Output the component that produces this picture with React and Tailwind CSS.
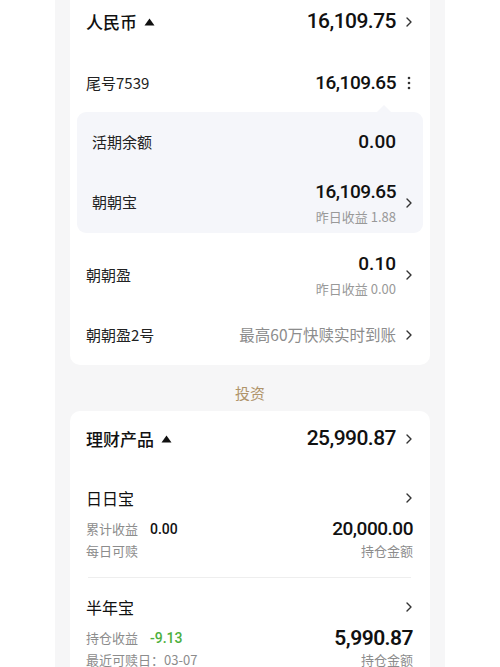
import React from 'react';

const cjk = { fontFamily: '"Noto Sans CJK SC", "Noto Sans", sans-serif' };
const num = { fontFamily: 'Roboto, "Noto Sans CJK SC", sans-serif' };

const Chevron = ({ className = '' }) => (
    <svg width="8" height="12" viewBox="0 0 8 12" className={className} fill="none" stroke="#333" strokeWidth="1.4" strokeLinecap="round" strokeLinejoin="round">
        <path d="M2 2l4 4-4 4" />
    </svg>
);

const Caret = () => (
    <svg width="11" height="8" viewBox="0 0 11 8" className="ml-[7px]">
        <path d="M5.5 0.5L10.5 7.5H0.5z" fill="#111" />
    </svg>
);

const Kebab = () => (
    <svg width="8" height="14" viewBox="0 0 8 14" fill="#333">
        <circle cx="4" cy="2" r="1.3" />
        <circle cx="4" cy="7" r="1.3" />
        <circle cx="4" cy="12" r="1.3" />
    </svg>
);

// right slot that keeps the amounts aligned whether or not a chevron sits there
const Slot = ({ children }) => (
    <div className="w-[17px] flex justify-end items-center">{children}</div>
);

const Product = ({ name, k1, v1, v1Class, k2, amount, amountClass }) => (
    <div>
        <div className="h-[26px] flex items-center justify-between">
            <span className="text-[16px] text-[#111]">{name}</span>
            <Chevron />
        </div>
        <div className="mt-[7px] flex justify-between">
            <div className="text-[13px] leading-[22px] text-[#8c8c8c]">
                <div className="flex items-center">
                    <span>{k1}</span>
                    <span className={`ml-[12px] text-[14px] font-medium ${v1Class}`} style={num}>{v1}</span>
                </div>
                <div>{k2}</div>
            </div>
            <div className="text-right leading-[22px]">
                <div className={`text-[#111] tracking-tight ${amountClass}`} style={num}>{amount}</div>
                <div className="text-[13px] text-[#8c8c8c]">持仓金额</div>
            </div>
        </div>
    </div>
);

export default function App() {
    return (
        <div className="w-full min-h-screen bg-white flex justify-center" style={cjk}>
            <div className="w-[390px] min-h-[667px] bg-[#f6f6f7] px-[15px]">
                {/* 人民币 card */}
                <div className="bg-white rounded-b-[10px] pt-[8px]">
                    <div className="h-[28px] pl-4 pr-[17px] flex items-center justify-between">
                        <div className="flex items-center text-[17px] font-medium text-[#111]">人民币<Caret /></div>
                        <div className="flex items-center">
                            <span className="text-[21px] font-medium text-[#111] tracking-tight" style={num}>16,109.75</span>
                            <Slot><Chevron /></Slot>
                        </div>
                    </div>
                    <div className="mt-[33px] h-[28px] pl-4 pr-[17px] flex items-center justify-between">
                        <span className="text-[15px] text-[#222]">尾号7539</span>
                        <div className="flex items-center">
                            <span className="text-[19px] font-medium text-[#111] tracking-tight" style={num}>16,109.65</span>
                            <Slot><Kebab /></Slot>
                        </div>
                    </div>

                    <div className="relative mt-[15px] mx-[7px] rounded-[9px] bg-[#f5f6fa]">
                        <div className="absolute -top-[7px] right-[32px] w-0 h-0 border-l-[7px] border-r-[7px] border-b-[7px] border-l-transparent border-r-transparent border-b-[#f5f6fa]" />
                        <div className="h-[60px] pl-[15px] pr-[10px] flex items-center justify-between">
                            <span className="text-[15px] text-[#222]">活期余额</span>
                            <div className="flex items-center">
                                <span className="text-[19px] font-medium text-[#111]" style={num}>0.00</span>
                                <Slot />
                            </div>
                        </div>
                        <div className="h-[61px] pl-[15px] pr-[10px] flex items-center justify-between">
                            <span className="text-[15px] text-[#222]">朝朝宝</span>
                            <div className="flex items-center">
                                <div className="text-right">
                                    <div className="text-[19px] leading-[22px] font-medium text-[#111] tracking-tight" style={num}>16,109.65</div>
                                    <div className="mt-[6px] text-[13px] leading-[16px] text-[#999]">昨日收益 1.88</div>
                                </div>
                                <Slot><Chevron /></Slot>
                            </div>
                        </div>
                    </div>

                    <div className="mt-[12px] h-[60px] pl-4 pr-[17px] flex items-center justify-between">
                        <span className="text-[15px] text-[#222]">朝朝盈</span>
                        <div className="flex items-center">
                            <div className="text-right">
                                <div className="text-[19px] leading-[22px] font-medium text-[#111]" style={num}>0.10</div>
                                <div className="mt-[6px] text-[13px] leading-[16px] text-[#999]">昨日收益 0.00</div>
                            </div>
                            <Slot><Chevron /></Slot>
                        </div>
                    </div>
                    <div className="h-[60px] pl-4 pr-[17px] flex items-center justify-between">
                        <span className="text-[15px] text-[#222]">朝朝盈2号</span>
                        <div className="flex items-center">
                            <span className="text-[15.5px] text-[#8c8c8c]">最高60万快赎实时到账</span>
                            <Slot><Chevron /></Slot>
                        </div>
                    </div>
                </div>

                <div className="pt-[18px] pb-[8px] leading-[20px] text-center text-[15px] text-[#b0946a]">投资</div>

                {/* 理财产品 card */}
                <div className="bg-white rounded-[10px] pl-4 pr-[17px]">
                    <div className="h-[56px] flex items-center justify-between">
                        <div className="flex items-center text-[17px] font-medium text-[#111]">理财产品<Caret /></div>
                        <div className="flex items-center">
                            <span className="text-[21px] font-medium text-[#111] tracking-tight" style={num}>25,990.87</span>
                            <Slot><Chevron /></Slot>
                        </div>
                    </div>
                    <div className="pt-[18px] pb-[15px]">
                        <Product name="日日宝" k1="累计收益" v1="0.00" v1Class="text-[#111]" k2="每日可赎" amount="20,000.00" amountClass="text-[19px] font-medium" />
                    </div>
                    <div className="h-px bg-[#eeeeee] mx-[2px]" />
                    <div className="pt-[16px] pb-[15px]">
                        <Product name="半年宝" k1="持仓收益" v1="-9.13" v1Class="text-[#4caf3d]" k2="最近可赎日：03-07" amount="5,990.87" amountClass="text-[21px] font-semibold" />
                    </div>
                </div>
            </div>
        </div>
    );
}
